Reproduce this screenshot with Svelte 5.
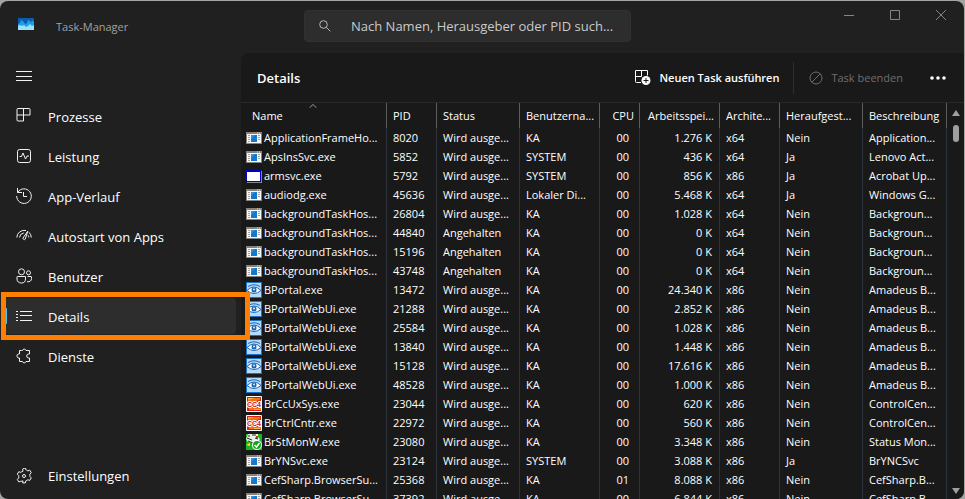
<script lang="ts">
	type Icon = "app" | "window" | "eye" | "cc4" | "status";

	interface Process {
		icon: Icon;
		name: string;
		pid: number;
		status: string;
		user: string;
		cpu: string;
		memory: string;
		arch: string;
		elevated: string;
		description: string;
	}

	const navItems = [
		{ id: "processes", label: "Prozesse" },
		{ id: "performance", label: "Leistung" },
		{ id: "history", label: "App-Verlauf" },
		{ id: "startup", label: "Autostart von Apps" },
		{ id: "users", label: "Benutzer" },
		{ id: "details", label: "Details" },
		{ id: "services", label: "Dienste" },
	];

	const columns = [
		{ key: "name", label: "Name" },
		{ key: "pid", label: "PID" },
		{ key: "status", label: "Status" },
		{ key: "user", label: "Benutzerna..." },
		{ key: "cpu", label: "CPU" },
		{ key: "memory", label: "Arbeitsspei..." },
		{ key: "arch", label: "Archite..." },
		{ key: "elevated", label: "Heraufgest..." },
		{ key: "description", label: "Beschreibung" },
	];

	function row(
		icon: Icon,
		name: string,
		pid: number,
		memory: string,
		arch: string,
		description: string,
		rest: Partial<Process> = {},
	): Process {
		return {
			icon,
			name,
			pid,
			status: "Wird ausge...",
			user: "KA",
			cpu: "00",
			memory: `${memory} K`,
			arch,
			elevated: "Nein",
			description,
			...rest,
		};
	}

	const suspended = { status: "Angehalten" };
	const system = { user: "SYSTEM", elevated: "Ja" };

	const processes: Process[] = [
		row("app", "ApplicationFrameHo...", 8020, "1.276", "x64", "Application..."),
		row("app", "ApsInsSvc.exe", 5852, "436", "x64", "Lenovo Act...", system),
		row("window", "armsvc.exe", 5792, "856", "x86", "Acrobat Up...", system),
		row("app", "audiodg.exe", 45636, "5.468", "x64", "Windows G...", {
			user: "Lokaler Di...",
			elevated: "Ja",
		}),
		row("app", "backgroundTaskHos...", 26804, "1.028", "x64", "Backgroun..."),
		row("app", "backgroundTaskHos...", 44840, "0", "x64", "Backgroun...", suspended),
		row("app", "backgroundTaskHos...", 15196, "0", "x64", "Backgroun...", suspended),
		row("app", "backgroundTaskHos...", 43748, "0", "x64", "Backgroun...", suspended),
		row("eye", "BPortal.exe", 13472, "24.340", "x86", "Amadeus B..."),
		row("eye", "BPortalWebUi.exe", 21288, "2.852", "x86", "Amadeus B..."),
		row("eye", "BPortalWebUi.exe", 25584, "1.028", "x86", "Amadeus B..."),
		row("eye", "BPortalWebUi.exe", 13840, "1.448", "x86", "Amadeus B..."),
		row("eye", "BPortalWebUi.exe", 15128, "17.616", "x86", "Amadeus B..."),
		row("eye", "BPortalWebUi.exe", 48528, "1.000", "x86", "Amadeus B..."),
		row("cc4", "BrCcUxSys.exe", 23044, "620", "x86", "ControlCen..."),
		row("cc4", "BrCtrlCntr.exe", 22972, "560", "x86", "ControlCen..."),
		row("status", "BrStMonW.exe", 23080, "3.348", "x86", "Status Mon..."),
		row("app", "BrYNSvc.exe", 23124, "3.088", "x86", "BrYNCSvc", system),
		row("app", "CefSharp.BrowserSu...", 25368, "8.088", "x86", "CefSharp.B...", { cpu: "01" }),
		row("app", "CefSharp.BrowserSu...", 37392, "6.844", "x86", "CefSharp.B..."),
	];

	let active = $state("details");
	let query = $state("");
</script>

{#snippet navIcon(id: string)}
	<svg class="nav-icon" viewBox="0 0 16 16" aria-hidden="true">
		{#if id === "processes"}
			<path d="M2 .5h11a1 1 0 0 1 1 1v5.500H1M7.500.5v12.500M1 1.500v10.500a1 1 0 0 0 1 1h5.500V7M1 1.500a1 1 0 0 1 1-1" />
		{:else if id === "performance"}
			<rect x="1.5" y="1.5" width="13" height="13" rx="2" />
			<path d="M3.500 8.500h2l1.500-3.500 2.500 6 1.500-3h2" />
		{:else if id === "history"}
			<path d="M1.500 0v4.500h4.500M1.800 4.300A7.300 7.300 0 1 1 .7 8M7.500 4v4.500h3.500" />
		{:else if id === "startup"}
			<path d="M.8 9.500A7.500 7.500 0 0 1 10 2.500M13 4.300a7.500 7.500 0 0 1 2.300 5.200M3.500 9.500a5 5 0 0 1 4.300-4.500M12 7.200a5 5 0 0 1 .8 2.300M11.800 3.200 7 10a1.300 1.300 0 0 0 2.200 1.200z" />
		{:else if id === "users"}
			<circle cx="5.500" cy="3.800" r="3" />
			<circle cx="12.500" cy="4.800" r="2" />
			<path d="M1.500 8.500h8v2.500c0 2.700-1.500 4-4 4s-4.500-1.300-4.500-4v-2q0-.5.5-.5zM11.500 8.500h3.500q.5 0 .5.500v1.500c0 2.500-1.800 3.500-4.500 3.200" />
		{:else if id === "details"}
			<path d="M4 3.500h12M4 7.500h12M4 12.500h12M0 3.500h2M0 6.500h2M0 9.500h2M0 12.500h2" />
		{:else if id === "services"}
			<path d="M5.500 2.500h1a1.800 1.800 0 0 1 3.500 0h3.500v3.500h-.8a2 2 0 0 0 0 4h.8v3.500H10a1.800 1.800 0 0 1-3.500 0H3.500V10a2 2 0 0 1-1-4h1V2.500z" />
		{:else if id === "settings"}
			<circle cx="8" cy="8" r="1.500" />
			<path d="m6.600 1.200.4 2a5 5 0 0 0-2.200 1.200l-2-.7-1.500 2.500 1.500 1.500a5 5 0 0 0 0 2.200l-1.500 1.500 1.500 2.500 2-.6A5 5 0 0 0 7 12.900l-.4 2h2.800l.4-2a5 5 0 0 0 2-1.100l2 .6 1.500-2.500-1.500-1.500a5 5 0 0 0 0-2.200l1.500-1.500-1.500-2.500-2 .7a5 5 0 0 0-2-1.200l-.4-2z" />
		{/if}
	</svg>
{/snippet}

{#snippet fileIcon(icon: Icon)}
	<svg class="file-icon" viewBox="0 0 16 16" aria-hidden="true">
		{#if icon === "app"}
			<path fill="#85827d" d="M0 2h16v12H0z" />
			<path fill="#f8f8f8" d="M1 4h14v9H1z" />
			<path fill="#ddd" d="M11 2.500h1v1h-1zM13 2.500h1v1h-1z" />
			<path fill="#1678c8" d="M5 5h6v7H5z" />
			<path fill="#3394dd" d="M5 5h4l-4 4z" />
			<path stroke="#a2a2a2" d="M2 5.500h2M2 7.500h2M2 9.500h2M2 11.500h2M12 5.500h2M12 7.500h2M12 9.500h2" />
		{:else if icon === "window"}
			<path fill="#0000c8" d="M0 2h15v12H0z" />
			<path fill="#fff" d="M1 4h13v9H1z" />
			<path fill="#888" d="M15 3h1v12H1v-1h14z" />
		{:else if icon === "eye"}
			<path fill="#1b72cc" d="M0 0h16v16H0z" />
			<path fill="#b3d9fc" d="M1 1h14v14H1z" />
			<path fill="#fff" stroke="#1b66b5" d="M1 8.500q7-7 14 0-7 6-14 0z" />
			<path fill="none" stroke="#1b66b5" d="M2 4.500q6-3.500 12 0" />
			<circle cx="8" cy="8" r="2.500" fill="#1b66b5" />
			<circle cx="8" cy="7.500" r="1" fill="#d8ecff" />
		{:else if icon === "cc4"}
			<rect width="16" height="16" rx="1" fill="#fff" />
			<path fill="#d9200c" d="M1 1h14v14H1z" />
			<path fill="#f5701a" d="M2 2h12v2L2 7zM3 12h12v2H3z" />
			<path fill="#ffb347" d="M2 2h7L2 4zM8 13h6v1H8z" />
			<text x="8" y="11">CC4</text>
		{:else}
			<path fill="#19b51e" d="M0 0h16v16H0z" />
			<path fill="#e9f2e7" d="M2 0h10v3l2 2-4 5-8-2-2-3z" />
			<path fill="none" stroke="#222" d="M2 2h2M6 1h4M1 4l5 2M9 4l3 1M2 7l5 2" />
			<path fill="#d83020" d="M10 2h2v2h-2z" />
			<path fill="#ffe12b" d="M0 11l4-2v3z" />
			<circle cx="11" cy="11" r="5" fill="#fff" />
			<circle cx="11" cy="11" r="4" fill="#12a51c" />
			<path fill="none" stroke="#fff" stroke-width="1.500" d="m8.500 11 2 2 3-4" />
		{/if}
	</svg>
{/snippet}

<div class="window">
	<header class="titlebar">
		<div class="brand">
			<svg class="logo" viewBox="0 0 16 12" aria-hidden="true">
				<path fill="#0b5cad" d="M0 0h16v12H0z" />
				<path fill="#1f9fe6" d="m0 6 2-1 1-3 2 1 2 3 2-1 1-3 2 1 1 2 1-3 2 2v8H0z" />
				<path fill="#9be1ff" d="m0 8 2-1 2 1 2-1 2 2 2-1 2-2 2 2 2-1v5H0z" />
			</svg>
			<span>Task-Manager</span>
		</div>
		<label class="search">
			<svg viewBox="0 0 12 12" aria-hidden="true">
				<circle cx="4.500" cy="4.500" r="3.800" />
				<path d="m7.300 7.300 4 4" />
			</svg>
			<input
				type="text"
				bind:value={query}
				aria-label="Suchen"
				placeholder="Nach Namen, Herausgeber oder PID such..." />
		</label>
		<div class="controls">
			<button type="button" aria-label="Minimieren">
				<svg viewBox="0 0 10 10"><path d="M0 5.500h10" /></svg>
			</button>
			<button type="button" aria-label="Maximieren">
				<svg viewBox="0 0 10 10"><path d="M.5.5h9v9h-9z" /></svg>
			</button>
			<button type="button" aria-label="Schließen">
				<svg viewBox="0 0 10 10"><path d="m0 0 10 10M10 0 0 10" /></svg>
			</button>
		</div>
	</header>

	<div class="body">
		<nav class="sidebar">
			<button type="button" class="menu" aria-label="Navigation">
				<svg class="nav-icon" viewBox="0 0 16 16">
					<path d="M0 3.500h16M0 8.500h16M0 12.500h16" />
				</svg>
			</button>
			{#each navItems as item (item.id)}
				<button
					type="button"
					class="nav-item"
					class:active={active === item.id}
					onclick={() => (active = item.id)}>
					{@render navIcon(item.id)}
					<span class="label">{item.label}</span>
					{#if item.id === "details"}
						<span class="marker"></span>
					{/if}
				</button>
			{/each}
			<button type="button" class="nav-item settings">
				{@render navIcon("settings")}
				<span>Einstellungen</span>
			</button>
		</nav>

		<main class="panel">
			<div class="toolbar">
				<h1>Details</h1>
				<button type="button" class="run">
					<svg viewBox="0 0 16 16" aria-hidden="true">
						<path fill="none" stroke="#fff" d="M6 12.500H1.500a1 1 0 0 1-1-1V.5h12v5M6.500.5v6M.5 6.500h6" />
						<circle cx="11" cy="10.500" r="4.500" fill="#fff" />
						<path stroke="#191919" d="M8.500 10.500h5M11 8v5" />
					</svg>
					Neuen Task ausführen
				</button>
				<button type="button" class="end" disabled>
					<svg viewBox="0 0 14 14" aria-hidden="true">
						<circle cx="7" cy="7" r="6" />
						<path d="m2.800 11.200 8.400-8.400" />
					</svg>
					Task beenden
				</button>
				<button type="button" class="more" aria-label="Mehr">
					<svg viewBox="0 0 16 4">
						<circle cx="2" cy="2" r="1.800" />
						<circle cx="8" cy="2" r="1.800" />
						<circle cx="14" cy="2" r="1.800" />
					</svg>
				</button>
			</div>

			<div class="list">
				<div class="rows">
					<table>
						<colgroup>
							{#each columns as column (column.key)}
								<col class="col-{column.key}" />
							{/each}
						</colgroup>
						<thead>
							<tr>
								{#each columns as column (column.key)}
									<th scope="col" class={column.key}>
										{column.label}
										{#if column.key === "name"}
											<svg class="sort" viewBox="0 0 8 4" aria-hidden="true">
												<path d="m.5 3.800 3.500-3.300 3.500 3.300" />
											</svg>
										{/if}
									</th>
								{/each}
							</tr>
						</thead>
						<tbody>
							{#each processes as process (process.pid)}
								<tr>
									<td class="name">
										<div class="file">
											{@render fileIcon(process.icon)}
											<span>{process.name}</span>
										</div>
									</td>
									<td>{process.pid}</td>
									<td>{process.status}</td>
									<td>{process.user}</td>
									<td class="cpu">{process.cpu}</td>
									<td class="memory">{process.memory}</td>
									<td>{process.arch}</td>
									<td>{process.elevated}</td>
									<td>{process.description}</td>
								</tr>
							{/each}
						</tbody>
					</table>
				</div>
				<div class="scrollbar" aria-hidden="true">
					<svg viewBox="0 0 8 6"><path d="M4 0 8 6H0z" /></svg>
					<span class="thumb"></span>
					<svg viewBox="0 0 8 6"><path d="M0 0h8L4 6z" /></svg>
				</div>
			</div>
		</main>
	</div>
</div>

<style>
	:global(body) {
		background: #a3a5a3;
	}

	.window {
		box-sizing: border-box;
		height: calc(100vh - 1px);
		margin: 1px 1px 0 0;
		display: flex;
		flex-direction: column;
		overflow: hidden;
		border-radius: 8px;
		background: #202020;
		color: #fff;
		font-family: "Open Sans", "Noto Sans", sans-serif;
		font-size: 13px;
	}

	button {
		padding: 0;
		border: 0;
		background: none;
		color: inherit;
		font: inherit;
	}

	svg {
		display: block;
		flex: none;
	}

	.titlebar {
		flex: none;
		height: 52px;
		display: grid;
		grid-template-columns: 304px minmax(0, 327px) 1fr;
	}

	.brand {
		display: flex;
		align-items: center;
		gap: 22px;
		padding: 0 0 2px 18px;
		color: #a0a0a0;
		font-size: 11px;
	}

	.logo {
		width: 16px;
		height: 12px;
		margin-bottom: 4px;
	}

	.search {
		box-sizing: border-box;
		height: 32px;
		margin-top: 9px;
		padding: 0 12px 0 14px;
		display: flex;
		align-items: center;
		gap: 20px;
		border: 1px solid #313131;
		border-radius: 4px;
		background: #2d2d2d;
	}

	.search svg {
		width: 12px;
		height: 12px;
		fill: none;
		stroke: #b8b8b8;
	}

	.search input {
		flex: 1;
		min-width: 0;
		padding: 0;
		border: 0;
		outline: 0;
		background: none;
		color: #fff;
		font: inherit;
	}

	.search input::placeholder {
		color: #cacaca;
		opacity: 1;
	}

	.controls {
		display: flex;
		justify-content: flex-end;
	}

	.controls button {
		width: 46px;
		height: 28px;
		display: grid;
		place-items: center;
	}

	.controls svg {
		width: 10px;
		height: 10px;
		overflow: visible;
		fill: none;
		stroke: #858585;
	}

	.body {
		flex: 1;
		min-height: 0;
		display: flex;
	}

	.sidebar {
		box-sizing: border-box;
		width: 241px;
		flex: none;
		display: flex;
		flex-direction: column;
		gap: 4px;
		padding: 5px;
	}

	.menu,
	.nav-item {
		position: relative;
		height: 36px;
		display: flex;
		align-items: center;
		gap: 16px;
		padding-left: 11px;
		border-radius: 4px;
		text-align: left;
	}

	.nav-icon {
		width: 16px;
		height: 16px;
		fill: none;
		stroke: #f2f2f2;
	}

	.label {
		padding-top: 2px;
	}

	.active {
		background: #2d2d2d;
	}

	.active::before {
		content: "";
		position: absolute;
		left: 0;
		width: 2px;
		height: 16px;
		border-radius: 1px;
		background: #4cc2ff;
	}

	.marker {
		position: absolute;
		z-index: 1;
		inset: -6px -14px -6px -4px;
		border: 5px solid #ff8000;
		pointer-events: none;
	}

	.settings {
		margin-top: auto;
	}

	.panel {
		flex: 1;
		min-width: 0;
		display: flex;
		flex-direction: column;
		border-top-left-radius: 8px;
		background: #191919;
	}

	.toolbar {
		flex: none;
		height: 49px;
		display: flex;
		align-items: center;
		padding: 0 18px 0 16px;
		border-bottom: 1px solid #292929;
		font-size: 11px;
	}

	h1 {
		margin: 0 auto 0 0;
		font-size: 13px;
		font-weight: 600;
	}

	.run,
	.end {
		height: 32px;
		display: flex;
		align-items: center;
		gap: 8px;
	}

	.run svg {
		width: 16px;
		height: 16px;
	}

	.run {
		padding-right: 14px;
		font-weight: 600;
	}

	.end {
		padding: 0 27px 0 15px;
		border-left: 1px solid #2e2e2e;
		color: #6e6e6e;
	}

	.end svg {
		width: 14px;
		height: 14px;
		fill: none;
		stroke: #6e6e6e;
	}

	.more svg {
		width: 16px;
		height: 4px;
		fill: #fff;
	}

	.list {
		flex: 1;
		min-height: 0;
		display: flex;
	}

	.rows {
		flex: 1;
		min-width: 0;
		overflow: hidden;
	}

	table {
		width: 100%;
		table-layout: fixed;
		border-collapse: separate;
		border-spacing: 0;
		font-size: 11px;
		line-height: 19px;
	}

	.col-name {
		width: 146px;
	}

	.col-pid {
		width: 50px;
	}

	.col-status {
		width: 83px;
	}

	.col-user,
	.col-memory {
		width: 80px;
	}

	.col-cpu {
		width: 40px;
	}

	.col-arch {
		width: 60px;
	}

	.col-elevated {
		width: 83px;
	}

	th,
	td {
		height: 19px;
		padding: 0 0 0 6px;
		border-right: 1px solid #2c333d;
		overflow: hidden;
		text-align: left;
		white-space: nowrap;
	}

	th {
		position: relative;
		height: 25px;
		border-right-color: #5c5c5c;
		font-weight: 400;
	}

	th.name {
		padding-left: 11px;
	}

	td.name {
		padding-left: 5px;
	}

	th.cpu,
	th.memory {
		padding: 0 5px 0 0;
		text-align: right;
	}

	td.cpu {
		padding: 0 10px 0 0;
		text-align: right;
	}

	td.memory {
		padding: 0 7px 0 0;
		text-align: right;
	}

	.sort {
		position: absolute;
		top: 1px;
		left: 68px;
		width: 8px;
		height: 4px;
		fill: none;
		stroke: #9a9a9a;
	}

	.file {
		display: flex;
		align-items: center;
		gap: 2px;
	}

	.file-icon {
		width: 16px;
		height: 16px;
	}

	.file-icon text {
		fill: #d01208;
		stroke: #fff;
		stroke-width: 2px;
		paint-order: stroke;
		font-family: "Liberation Sans", sans-serif;
		font-size: 7px;
		font-weight: 700;
		text-anchor: middle;
	}

	.scrollbar {
		width: 17px;
		flex: none;
		display: flex;
		flex-direction: column;
		align-items: center;
		gap: 9px;
		padding: 7px 0 5px;
	}

	.scrollbar svg {
		width: 8px;
		height: 6px;
		fill: #9f9f9f;
	}

	.scrollbar svg:last-child {
		margin-top: auto;
	}

	.thumb {
		width: 6px;
		height: 17px;
		border-radius: 3px;
		background: #9f9f9f;
	}
</style>
